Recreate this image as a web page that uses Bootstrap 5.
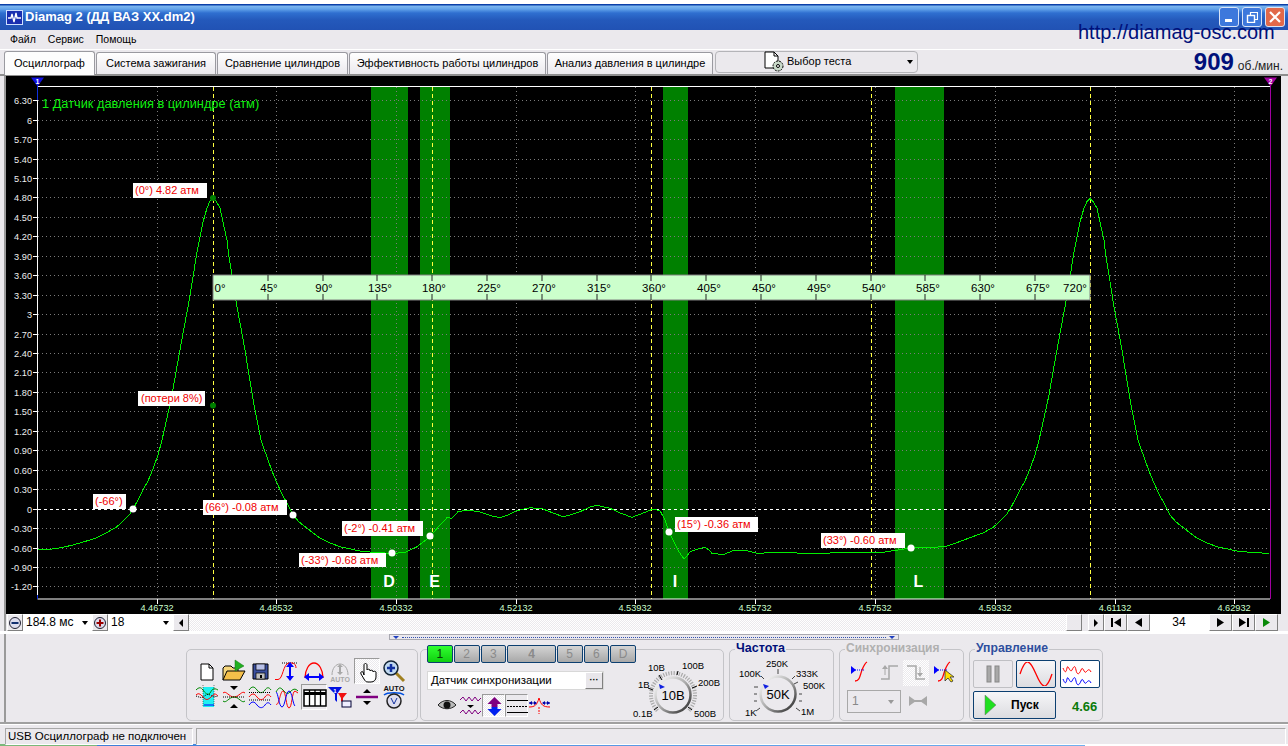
<!DOCTYPE html>
<html lang="ru">
<head>
<meta charset="utf-8">
<title>Diamag 2</title>
<link href="https://cdn.jsdelivr.net/npm/bootstrap@5.3.0/dist/css/bootstrap.min.css" rel="stylesheet">
<style>
html,body{margin:0;height:746px;overflow:hidden;background:#fff}
body{font-family:"Liberation Sans",Arial,sans-serif;font-size:11px;color:#000;line-height:1.2}
.shell{position:relative;width:1288px;height:746px;padding-top:4px;background:#fff}
.ttl{height:26px;background:linear-gradient(#0a3fa8 0,#0a3fa8 1px,#7db7ef 2px,#62a3ea 5px,#2f6fd0 9px,#2459bb 16px,#2152b4 26px);color:#fff;font-size:13px;font-weight:700;padding:0 3px 0 6px}
.ttl-ico{width:17px;height:15px;margin-right:2px}
.win-b{width:20px;height:20px;border:1px solid #d8e4f8;border-radius:3px;background:#3d78dc;padding:0;margin-left:3px;display:flex;align-items:center;justify-content:center}
.win-x{background:#e2694a}
.url{position:absolute;left:1078px;top:20px;font-size:20px;color:#00107a;line-height:24px}
.mnu{height:20px;background:#ebe9ed;border-bottom:1px solid #fff;padding-left:10px;gap:12px;font-size:10.5px}
.tabs-row{height:26px;background:#ebe9ed;padding-left:4px;border-bottom:2px solid #8e8e8e}
.tb{height:22px;margin-top:2px;border:1px solid #9a9aa0;border-radius:3px 3px 0 0;background:linear-gradient(#fff,#ebe9ed);display:flex;align-items:center;justify-content:center;margin-right:1px;white-space:nowrap;border-bottom:0}
.tb-on{height:24px;background:#fdfdfd;margin-top:1px}
.tb-pick{width:203px;height:22px;margin-top:1px;margin-left:1px;border:1px solid #b4b4b8;border-radius:4px;background:#ebe9ed;position:relative;display:flex;align-items:center;padding-left:47px}
.caret-d{width:0;height:0;border:3px solid transparent;border-top:4px solid #000;border-bottom:0}
.rpm{margin-left:auto;color:#00107a;font-size:24px;font-weight:700;line-height:24px;padding-right:5px;display:flex;align-items:baseline;gap:4px}
.rpm-u{font-size:12px;font-weight:400;color:#222}
.edge{background-color:#ebe9ed;background-image:linear-gradient(#9a9a9a,#9a9a9a);background-size:2px 100%;background-position:4px 0;background-repeat:no-repeat}
.plot-wrap{height:538px;padding-left:6px;padding-right:7px}
.plot{display:block;width:1275px;height:538px;background:#000;font-family:"Liberation Sans",Arial,sans-serif}
.srow{height:18px;padding-left:7px;align-items:stretch;border-bottom:1px solid #fff}
.sb{width:16px;border:1px solid;border-color:#fff #808080 #808080 #fff;background:#ebe9ed;padding:0;display:flex;align-items:center;justify-content:center;flex:none;font-size:11px}
.sc{background:#fff;display:flex;align-items:center;justify-content:space-between;padding:0 4px 0 3px;font-size:12px}
.chk{background:repeating-conic-gradient(#fff 0 25%,#ebe9ed 0 50%) 0 0/2px 2px}
.panel{height:90px;border-bottom:2px solid #a0a0a0;box-sizing:border-box}
.split{margin:2px 0 0 389px;width:510px;height:6px;border:1px solid #a8a8b0;background:#ebe9ed;position:relative;display:flex;align-items:center;justify-content:space-between;padding:0 3px}
.split-dots{flex:1;border-top:1px dotted #3050b0;margin:0 3px}
.tri-b{width:0;height:0;border:3px solid transparent;border-top:3px solid #2040c0;border-bottom:0}
.grps{margin:9px 0 0 186px;gap:2px;height:72px}
.grp{height:72px;border:1px solid #c4c4c8;border-radius:5px;position:relative}
.g-tools{width:232px;padding:8px 0 0 7px;display:grid;grid-template-columns:repeat(8,26.67px);grid-auto-rows:26px}
.ic{width:26px;height:26px;display:block}
.pressed{width:26px;height:26px;border:1px solid;border-color:#9a9a9a #fff #fff #9a9a9a}
.g-ch{width:304px;display:flex;padding-left:6px;margin-left:0}
.ch-col{width:209px;margin-top:-5px}
.ch-btns{gap:1px;height:18px}
.cb{height:18px;border:1px solid #0c3f70;border-radius:2px;background:linear-gradient(#d4d4d4,#a8a8a8);color:#8a8a8a;font-size:12px;display:flex;align-items:center;justify-content:center;padding:0}
.cb-on{background:linear-gradient(#30ff30,#10d010);color:#084008}
.cmb{margin-top:8px;width:177px;height:19px;background:#fff;display:flex;align-items:center;justify-content:space-between;font-size:11.5px;padding-left:3px;border:1px solid #d8d8d8}
.cmb-b{width:18px;height:17px;background:#e8e6ea;border:1px solid;border-color:#fff #808080 #808080 #fff;font-size:9px;font-weight:700;line-height:11px;text-align:center;padding:0}
.ch-ic{margin:4px 0 0 9px;gap:0;align-items:center}
.ch-ic .ic{width:23px;height:23px}
.ch-ic .pressed{width:23px;height:23px}
.gt{position:absolute;top:-10px;left:5px;font-size:12.5px;font-weight:700;padding:0 1px;background:#ebe9ed;line-height:16px;color:#00107a}
.gt-sy{color:#b0b0b0;left:5px;font-size:12px}
.gt-ct{color:#2e4f9e;left:5px;font-size:12.200px}
.g-fq{width:105px;margin-left:3px}
.g-sy{width:125px;margin-left:3px}
.g-ct{width:134px;margin-left:3px}
.knob{display:block;font-family:"Liberation Sans",Arial,sans-serif}
.knob-c{margin:8px 0 0 -15px}
.sy-row{position:absolute;left:8px;top:10px;display:flex;gap:1.5px}
.sy-row .ic{width:26px;height:24px}
.sy-cmb{position:absolute;left:7px;top:40px;width:54px;height:23px;border:1px solid #a8a8a8;color:#888;font-size:12px;display:flex;align-items:center;justify-content:space-between;padding:0 6px 0 4px}
.sy-st{position:absolute;left:68px;top:45px}
.c-b{position:absolute;height:28px;border:1px solid #0c3f70;border-radius:2px;background:linear-gradient(#f6f6f8,#dcdce0);padding:0;display:flex;align-items:center;justify-content:center}
.c-g{border-color:#c0c0c4;background:#ebe9ed}
.c-t{position:absolute;left:102px;top:49px;color:#0a7a0a;font-weight:700;font-size:13px}
.stat{height:20px;background:#ebe9ed;padding:3px 0 0 5px;border-top:1px solid #fff;font-size:11.5px}
.stat-a{width:188px;border:1px solid;border-color:#a8a8a8 #fff #fff #a8a8a8;padding-left:2px;height:17px;line-height:14px;white-space:nowrap}
.stat-b{flex:1;margin-left:3px;border:1px solid;border-color:#a8a8a8 #fff #fff #a8a8a8;height:17px;margin-right:2px}
.task{height:4px;background:linear-gradient(90deg,#7ab87a 0,#7ab87a 97px,#3d7fd8 97px,#6fb0ee 1085px,#fff 1085px)}
</style>
</head>
<body>
<div class="shell">
  <div class="ttl d-flex align-items-center">
    <svg class="ttl-ico" viewBox="0 0 17 15"><rect x=".5" y=".5" width="16" height="14" fill="#1a2fb0" stroke="#cfe0ff"/><path d="M2 8h3l1-4 2 8 2-9 1 5h4" fill="none" stroke="#fff" stroke-width="1.3"/></svg>
    <span>Diamag 2 (ДД ВАЗ XX.dm2)</span>
    <span class="ms-auto d-flex">
      <button class="win-b" aria-label="min"><svg width="10" height="10"><rect x="1" y="7" width="7" height="3" fill="#fff"/></svg></button>
      <button class="win-b" aria-label="max"><svg width="12" height="12" fill="none" stroke="#fff"><rect x="1.5" y="4.5" width="7" height="7" stroke-width="1.4"/><path d="M4.5 4V1.5h7v7H9" stroke-width="1.2"/></svg></button>
      <button class="win-b win-x" aria-label="close"><svg width="12" height="12" stroke="#fff" stroke-width="2.2"><path d="M1 1l10 10M11 1L1 11"/></svg></button>
    </span>
  </div>
  <div class="url">http://diamag-osc.com</div>
  <div class="mnu d-flex align-items-center"><span>Файл</span><span>Сервис</span><span>Помощь</span></div>
  <div class="tabs-row d-flex">
    <div class="tb tb-on" style="width:91px">Осциллограф</div>
    <div class="tb" style="width:120px">Система зажигания</div>
    <div class="tb" style="width:131px">Сравнение цилиндров</div>
    <div class="tb" style="width:197px">Эффективность работы цилиндров</div>
    <div class="tb" style="width:166px">Анализ давления в цилиндре</div>
    <div class="tb-pick">
      <svg width="24" height="22" viewBox="0 0 24 22" class="me-0"><path d="M2 1h9l4 4v12H2z" fill="#fff" stroke="#000"/><path d="M11 1v4h4" fill="none" stroke="#000"/><circle cx="15" cy="15" r="5" fill="#c8d8c8" stroke="#000" stroke-dasharray="2 1"/><circle cx="15" cy="15" r="1.5" fill="#fff" stroke="#000"/></svg>
      <span>Выбор теста</span>
      <span class="caret-d ms-auto me-1"></span>
    </div>
    <div class="rpm"><span>909</span><span class="rpm-u">об./мин.</span></div>
  </div>
  <div class="plot-wrap edge">
  <svg class="plot" viewBox="6 76 1275 538" xmlns="http://www.w3.org/2000/svg">
    <g fill="#008000"><rect x="371" y="87" width="37" height="512"/><rect x="420" y="87" width="30" height="512"/><rect x="663" y="87" width="25" height="512"/><rect x="895" y="87" width="49" height="512"/></g>
    <path d="M38 100.500H1270M38 120.500H1270M38 139.500H1270M38 159.500H1270M38 178.500H1270M38 197.500H1270M38 217.500H1270M38 236.500H1270M38 256.500H1270M38 275.500H1270M38 295.500H1270M38 314.500H1270M38 334.500H1270M38 353.500H1270M38 372.500H1270M38 392.500H1270M38 411.500H1270M38 431.500H1270M38 450.500H1270M38 470.500H1270M38 489.500H1270M38 528.500H1270M38 548.500H1270M38 567.500H1270M38 586.500H1270" stroke="#7a7a7a" stroke-dasharray="1 3" fill="none"/>
    <path d="M157.500 87V599M276.500 87V599M396.500 87V599M516.500 87V599M635.500 87V599M755.500 87V599M875.500 87V599M995.500 87V599M1115.500 87V599M1234.500 87V599" stroke="#7a7a7a" stroke-dasharray="1 3" fill="none"/>
    <path d="M213.500 87V599M432.500 87V599M651.500 87V599M871.500 87V599M1090.500 87V599" stroke="#ffff40" stroke-dasharray="4 3" fill="none"/>
    <path d="M38 509.500H1270" stroke="#fff" stroke-dasharray="3 3" fill="none"/>
    <path d="M37.500 86V599H1270M37 86.500H1270" stroke="#fff" fill="none"/>
    <path d="M1270.500 86V599" stroke="#a000a0" fill="none"/>
    <path d="M37.500 80V100M37.500 595V599" stroke="#1030e0" fill="none"/>
    <path d="M31 77.500h13l-6.500 9z" fill="#1010e0"/><text x="37.500" y="83.500" fill="#fff" font-size="7" font-weight="700" text-anchor="middle">1</text>
    <path d="M1264 77.500h13l-6.500 9z" fill="#a000a0"/><text x="1270.500" y="83.500" fill="#fff" font-size="7" font-weight="700" text-anchor="middle">2</text>
    <path d="M33 100.500h4M33 120.500h4M33 139.500h4M33 159.500h4M33 178.500h4M33 197.500h4M33 217.500h4M33 236.500h4M33 256.500h4M33 275.500h4M33 295.500h4M33 314.500h4M33 334.500h4M33 353.500h4M33 372.500h4M33 392.500h4M33 411.500h4M33 431.500h4M33 450.500h4M33 470.500h4M33 489.500h4M33 509.500h4M33 528.500h4M33 548.500h4M33 567.500h4M33 586.500h4M157.500 599v5M276.500 599v5M396.500 599v5M516.500 599v5M635.500 599v5M755.500 599v5M875.500 599v5M995.500 599v5M1115.500 599v5M1234.500 599v5" stroke="#fff"/>
    <g fill="#eee" font-size="9.200" text-anchor="end">
      <text x="32" y="104">6.30</text><text x="32" y="124">6</text><text x="32" y="143">5.70</text><text x="32" y="163">5.40</text><text x="32" y="182">5.10</text><text x="32" y="201">4.80</text><text x="32" y="221">4.50</text><text x="32" y="240">4.20</text><text x="32" y="260">3.90</text><text x="32" y="279">3.60</text><text x="32" y="299">3.30</text><text x="32" y="318">3</text><text x="32" y="338">2.70</text><text x="32" y="357">2.40</text><text x="32" y="376">2.10</text><text x="32" y="396">1.80</text><text x="32" y="415">1.50</text><text x="32" y="435">1.20</text><text x="32" y="454">0.90</text><text x="32" y="474">0.60</text><text x="32" y="493">0.30</text><text x="32" y="513">0</text><text x="32" y="532">-0.30</text><text x="32" y="552">-0.60</text><text x="32" y="571">-0.90</text><text x="32" y="590">-1.20</text>
    </g>
    <g fill="#ccffcc" font-size="9.200" text-anchor="middle">
      <text x="157" y="611">4.46732</text><text x="276" y="611">4.48532</text><text x="396" y="611">4.50332</text><text x="516" y="611">4.52132</text><text x="635" y="611">4.53932</text><text x="755" y="611">4.55732</text><text x="875" y="611">4.57532</text><text x="995" y="611">4.59332</text><text x="1115" y="611">4.61132</text><text x="1234" y="611">4.62932</text>
    </g>
    <text x="42" y="108" fill="#10f010" font-size="12.800">1 Датчик давления в цилиндре (атм)</text>
    <polyline fill="none" stroke="#00f000" shape-rendering="crispEdges" points="38,549.300 50,549.300 62,547.500 73,545 85,541.500 97,537.700 107,532.500 117,526.700 125,519 130,514 133,509 138,500 143,490 148,481 153,469 158,455 162,440 167,418 172,395 176,372 180,350 184,328 188,307 193,277 197,252 200,237 203,222 207,208 210,201 213,197.500 216,201 220,208 223,222 227,240 229,257 232,275 237,307 241,328 245,350 249,375 254,405 258,425 261,440 264,449 267,457 272,471 277,483 282,494 287,503 293,515 299,522 307,528 313,533 320,538 330,543 340,546.700 360,551 377,552.700 392,553.300 405,552.700 417,546.700 430,536.700 440,525 447,517.700 452,518.300 458,511.700 468,510 480,512 490,515.500 500,517.700 508,515 517,510.700 530,507.700 543,509 553,513 563,516.700 572,514.500 580,511.700 590,507 597,505.300 610,508.300 620,513 632,517.300 642,513.500 653,509 660,510.700 665,520 669,531.700 677,548.300 681,555 684,558.700 687,556 690,551.700 697,549.300 705,547.300 709,550 712,553.300 723,554.700 733,550.700 747,550.700 757,553.300 780,552.300 813,553.700 847,552.300 880,552.700 911,548 933,547.500 947,546 960,541.500 970,537.700 984,532.500 994,526.700 1002,519 1007,514 1010,509 1015,500 1020,490 1025,481 1030,469 1035,455 1039,440 1044,418 1049,395 1053,372 1057,350 1061,328 1065,307 1070,277 1074,252 1077,237 1080,222 1084,208 1087,201.500 1090,198.500 1093,201.500 1097,208 1100,222 1104,240 1106,257 1109,275 1114,307 1118,328 1122,350 1126,375 1131,405 1135,425 1138,440 1141,449 1144,457 1149,471 1154,483 1159,494 1164,503 1170,515 1176,522 1184,528 1190,533 1197,538 1207,543 1217,546.700 1237,551 1254,552.700 1269,553.300"/>
    <g>
      <rect x="213" y="275" width="877" height="25" fill="#ccffcc" stroke="#808080"/>
      <path d="M268 275v6M268 300v-6M323 275v6M323 300v-6M377 275v6M377 300v-6M432 275v6M432 300v-6M487 275v6M487 300v-6M542 275v6M542 300v-6M597 275v6M597 300v-6M651 275v6M651 300v-6M706 275v6M706 300v-6M761 275v6M761 300v-6M816 275v6M816 300v-6M871 275v6M871 300v-6M925 275v6M925 300v-6M980 275v6M980 300v-6M1035 275v6M1035 300v-6" stroke="#222"/>
      <g font-size="11.500" fill="#000" text-anchor="middle">
        <text x="220" y="292">0°</text><text x="269" y="292">45°</text><text x="324" y="292">90°</text><text x="380" y="292">135°</text><text x="434" y="292">180°</text><text x="489" y="292">225°</text><text x="544" y="292">270°</text><text x="599" y="292">315°</text><text x="654" y="292">360°</text><text x="709" y="292">405°</text><text x="764" y="292">450°</text><text x="819" y="292">495°</text><text x="874" y="292">540°</text><text x="928" y="292">585°</text><text x="983" y="292">630°</text><text x="1038" y="292">675°</text><text x="1075" y="292">720°</text>
      </g>
    </g>
    <g fill="#fff">
      <rect x="133" y="183" width="74" height="15"/><rect x="138" y="391" width="67" height="15"/><rect x="93" y="494" width="33" height="15"/><rect x="203" y="500" width="84" height="15"/><rect x="342" y="521" width="81" height="15"/><rect x="299" y="553" width="87" height="14"/><rect x="675" y="517" width="83" height="15"/><rect x="821" y="533" width="84" height="15"/>
      <circle cx="133" cy="509" r="3.500"/><circle cx="293" cy="515" r="3.500"/><circle cx="392" cy="553" r="3.500"/><circle cx="430" cy="536" r="3.500"/><circle cx="669" cy="532" r="3.500"/><circle cx="911" cy="548" r="3.500"/>
    </g>
    <circle cx="213" cy="198" r="3" fill="#008000"/><circle cx="213" cy="405.500" r="3" fill="#008000"/>
    <g fill="#f00000" font-size="11">
      <text x="135" y="194">(0°) 4.82 атм</text><text x="141" y="402">(потери 8%)</text><text x="95" y="505">(-66°)</text><text x="205" y="511">(66°) -0.08 атм</text><text x="344" y="532">(-2°) -0.41 атм</text><text x="301" y="564">(-33°) -0.68 атм</text><text x="677" y="528">(15°) -0.36 атм</text><text x="823" y="544">(33°) -0.60 атм</text>
    </g>
    <g fill="#fff" font-size="16" font-weight="700" text-anchor="middle">
      <text x="389" y="587">D</text><text x="434.500" y="587">E</text><text x="675" y="587">I</text><text x="918.500" y="587">L</text>
    </g>
  </svg>
  </div>
  <div class="srow d-flex edge">
    <button class="sb" aria-label="minus"><svg width="14" height="14"><circle cx="7" cy="7" r="5.500" fill="#dde" stroke="#223"/><rect x="3.500" y="6" width="7" height="2" fill="#123070"/></svg></button>
    <div class="sc" style="width:69px"><span>184.8 мс</span><span class="caret-d"></span></div>
    <button class="sb" aria-label="plus"><svg width="14" height="14"><circle cx="7" cy="7" r="5.500" fill="#dde" stroke="#223"/><path d="M3.500 7h7M7 3.500v7" stroke="#900" stroke-width="2"/></svg></button>
    <div class="sc" style="width:65px"><span>18</span><span class="caret-d"></span></div>
    <button class="sb" aria-label="left"><svg width="6" height="8"><path d="M5 0v8L1 4z"/></svg></button>
    <div class="chk" style="width:877px"></div>
    <button class="sb" aria-label="thumb"></button>
    <div style="width:6px"></div>
    <button class="sb" aria-label="right"><svg width="6" height="8"><path d="M1 0v8l4-4z"/></svg></button>
    <button class="sb" style="width:23px" aria-label="first"><svg width="12" height="9"><path d="M1 0h2v9H1zM11 0v9L4 4.500z"/></svg></button>
    <button class="sb" style="width:23px" aria-label="prev"><svg width="9" height="9"><path d="M8 0v9L1 4.500z"/></svg></button>
    <div class="sc justify-content-center" style="width:59px"><span>34</span></div>
    <button class="sb" style="width:23px" aria-label="next"><svg width="9" height="9"><path d="M1 0v9l7-4.500z"/></svg></button>
    <button class="sb" style="width:23px" aria-label="last"><svg width="12" height="9"><path d="M1 0v9l7-4.500zM9 0h2v9H9z"/></svg></button>
    <button class="sb" style="width:23px" aria-label="play"><svg width="9" height="9"><path d="M1 0v9l7-4.500z" fill="#0a8a0a"/></svg></button>
  </div>
  <div class="panel edge">
    <div class="split"><span class="tri-b"></span><span class="split-dots"></span><span class="tri-b"></span></div>
    <div class="grps d-flex">
      <div class="grp g-tools">
        <svg class="ic" viewBox="0 0 26 26"><path d="M7 6h8l4 4v12H7z" fill="#fff" stroke="#000"/><path d="M15 6v4h4" fill="none" stroke="#000"/></svg>
        <svg class="ic" viewBox="0 0 26 26"><path d="M2 22V10l2-2h6l2 2h5v4" fill="#f6d77e" stroke="#000"/><path d="M2 22l4-9h18l-5 9z" fill="#f4bf4a" stroke="#000"/><path d="M14 2l9 6-9 5z" fill="#20b020" stroke="#107010" stroke-width=".5"/></svg>
        <svg class="ic" viewBox="0 0 26 26"><path d="M6 6h15v15H6z" fill="#3a4fa0" stroke="#000"/><rect x="9" y="6" width="9" height="6" fill="#b8c0e8" stroke="#000" stroke-width=".7"/><rect x="9" y="15" width="9" height="6" fill="#c0c0c0" stroke="#000" stroke-width=".7"/><rect x="13" y="17" width="2" height="3"/></svg>
        <svg class="ic" viewBox="0 0 26 26"><path d="M8 5h15" stroke="#000" stroke-dasharray="1 1"/><path d="M1 21.500h3c5 0 5-16 11-16.500h3c3 0 4 3 4 5" fill="none" stroke="#f00"/><path d="M16 5v16" stroke="#00f" stroke-width="2"/><path d="M12 9l4-5 4 5zM12 18l4 5 4-5z" fill="#00f"/></svg>
        <svg class="ic" viewBox="0 0 26 26"><path d="M4 20c0-8 4-15 9-15s9 7 9 15" fill="none" stroke="#f00" stroke-width="1.300"/><path d="M5 19h16" stroke="#00f" stroke-width="2"/><path d="M8 15l-5 4 5 4zM18 15l5 4-5 4z" fill="#00f"/></svg>
        <svg class="ic" viewBox="0 0 26 26"><path d="M5 17c0-7 4-11 8-11s8 4 8 11" fill="none" stroke="#a8a8a8"/><path d="M13 7v9" stroke="#a8a8a8" stroke-width="2"/><path d="M10 9l3-3 3 3zM10 14l3 3 3-3z" fill="#a8a8a8"/><text x="13" y="24" font-size="7" font-weight="700" fill="#a8a8a8" text-anchor="middle" font-family="Liberation Sans">AUTO</text></svg>
        <div class="pressed chk"><svg class="ic" viewBox="1 1 26 26"><path d="M10 17V7c0-2 3-2 3 0v5c0-1 3-1 3 0v1c0-1 3-1 3 0v1c0-1 3-1 3 0v5c0 3-2 5-5 5h-3c-2 0-3-1-4-3l-3-5c-1-2 1-3 2-2z" fill="#fff" stroke="#000"/></svg></div>
        <svg class="ic" viewBox="0 0 26 26"><path d="M15 15l8 8" stroke="#a08020" stroke-width="3"/><circle cx="10" cy="10" r="7" fill="#c0d8f0" stroke="#123" stroke-width="1.500"/><path d="M10 6v8M6 10h8" stroke="#1030a0" stroke-width="2.500"/></svg>
        <svg class="ic" viewBox="0 0 26 26"><rect x="9" y="3" width="11" height="20" fill="#20f0f0"/><path d="M2 6c3-3 5-3 7 0s5 6 7 3 3-6 8-3" fill="none" stroke="#080"/><path d="M2 12c3 1 5 2 7 1s4-4 7-2 4 2 8 1" fill="none" stroke="#000" stroke-dasharray="1 1"/><path d="M2 11c3-3 5 0 8 3s5 1 8-2 4-2 6 0" fill="none" stroke="#f00"/><path d="M10 21h10" stroke="#00f"/><path d="M9 1v22M20 1v22" stroke="#000" stroke-width=".5" stroke-dasharray="1 1"/></svg>
        <svg class="ic" viewBox="0 0 26 26"><path d="M2 9c3-3 6 4 11 4s8-7 11-4" fill="none" stroke="#f00"/><path d="M2 17c3 3 6-4 11-4s8 7 11 4" fill="none" stroke="#080"/><path d="M2 13h22" stroke="#000" stroke-dasharray="1 1"/><path d="M9 2h8l-4 4zM9 24h8l-4-4z"/></svg>
        <svg class="ic" viewBox="0 0 26 26"><path d="M2 6c3-4 5-4 8 0s6 3 8 0 4-3 6 0" fill="none" stroke="#080"/><path d="M2 8.500h22M2 16h22" stroke="#000" stroke-dasharray="1 1"/><path d="M2 13c3-4 5-4 8 0s6 3 8 0 4-3 6 0" fill="none" stroke="#f00"/><path d="M2 21c3-4 5-4 8 0s6 3 8 0 4-3 6 0" fill="none" stroke="#00f"/></svg>
        <svg class="ic" viewBox="0 0 26 26"><path d="M2 8c3-5 4-5 7-2s4 5 7 2 5-4 8-1" fill="none" stroke="#080"/><path d="M2 20c3 3 4-13 7-13s3 17 6 17 3-17 6-17l3 2" fill="none" stroke="#f00"/><path d="M2 8c2 0 3 15 6 15s4-16 7-16 4 14 6 15" fill="none" stroke="#00f"/></svg>
        <div class="pressed" style="background:#ebe9ed"><svg class="ic" viewBox="1 1 26 26"><rect x="3" y="6" width="22" height="16" fill="#fff" stroke="#000" stroke-width="1.500"/><path d="M3 9.500h22" stroke="#000" stroke-width="3"/><path d="M8.500 6v16M14 6v16M19.500 6v16" stroke="#000" stroke-width="1.300"/></svg></div>
        <svg class="ic" viewBox="0 0 26 26"><path d="M1 3h14l-5 7v8l-2-2V10z" fill="#0010e0"/><path d="M11 9h9l-4 5v5l-2-2v-3z" fill="#f01010"/><text x="8" y="8.500" font-size="6" font-weight="700" fill="#fff" text-anchor="middle" font-family="Liberation Sans">1</text><rect x="15" y="17" width="9" height="6" fill="#eef" stroke="#003"/></svg>
        <svg class="ic" viewBox="0 0 26 26"><path d="M2 13h22" stroke="#800080" stroke-width="2.500"/><path d="M9 9l4-4 4 4zM9 17l4 4 4-4z"/></svg>
        <svg class="ic" viewBox="0 0 26 26"><text x="13" y="7" font-size="7.500" font-weight="700" fill="#111" text-anchor="middle" font-family="Liberation Sans">AUTO</text><path d="M3 11c3-3 17-3 20 0" fill="none" stroke="#0050e0" stroke-width="1.500"/><circle cx="13" cy="17" r="7" fill="#dde" stroke="#222" stroke-width="1.500"/><path d="M10 14l3 6 3-6" fill="none" stroke="#1030a0"/></svg>
      </div>
      <div class="grp g-ch">
        <div class="ch-col">
          <div class="ch-btns d-flex">
            <button class="cb cb-on" style="width:26px">1</button><button class="cb" style="width:26px">2</button><button class="cb" style="width:26px">3</button><button class="cb fw-bold" style="width:49px">4</button><button class="cb" style="width:26px">5</button><button class="cb" style="width:26px">6</button><button class="cb" style="width:26px">D</button>
          </div>
          <div class="cmb"><span>Датчик синхронизации</span><button class="cmb-b">···</button></div>
          <div class="ch-ic d-flex">
            <svg class="ic" viewBox="0 0 23 23"><path d="M2 11c5-6 13-6 18 0-5 5-13 5-18 0z" fill="#bbb" stroke="#222"/><circle cx="11" cy="11" r="3.500" fill="#111"/></svg>
            <svg class="ic" viewBox="0 0 23 23"><path d="M1 6l3-3 3 4 3-4 3 4 3-4 3 4 3-3" fill="none" stroke="#800080"/><path d="M8 11h7l-3.500 3z" fill="#000"/><path d="M1 19l3-3 3 4 3-4 3 4 3-4 3 4 3-3" fill="none" stroke="#800080"/></svg>
            <div class="pressed chk"><svg class="ic" viewBox="0 0 23 23"><path d="M11.500 2l-7 7h4v3h6V9h4z" fill="#800080"/><path d="M11.500 21l-7-7h4v-2h6v2h4z" fill="#0020f0"/></svg></div>
            <div class="pressed"><svg class="ic" viewBox="0 0 23 23"><path d="M1 5.500h21M1 17.500h21" stroke="#000"/><path d="M1 11.500h21" stroke="#000" stroke-dasharray="2 1"/></svg></div>
            <svg class="ic" viewBox="0 0 23 23"><path d="M1 13c6 0 8-2 10-9 2 7 4 9 11 9" fill="none" stroke="#f00"/><path d="M1 9h7M15 9h7" stroke="#00a"/><path d="M1 9l3-2v4zM22 9l-3-2v4zM9 9L6 7v4zM14 9l3-2v4z" fill="#00a"/><path d="M11 13v7" stroke="#f00" stroke-dasharray="2 1"/></svg>
          </div>
        </div>
        <svg class="knob knob-c" width="100" height="64" viewBox="0 0 100 64">
          <defs><linearGradient id="kg" x1="0" y1="0" x2="1" y2="1"><stop offset=".1" stop-color="#f4f4f4"/><stop offset=".5" stop-color="#aaa"/><stop offset="1" stop-color="#222"/></linearGradient></defs>
          <path d="M36.400 52.600A22 22 0 1 1 67.600 52.600" fill="none" stroke="#aaa" stroke-width="4" stroke-dasharray="1.200 1.400"/>
          <circle cx="52" cy="37" r="17.500" fill="#ebe9ed" stroke="url(#kg)" stroke-width="2.500"/>
          <path d="M38 17l3 5M57 13l-1 4M27 30l5 2M71 30l5-2M33 52l4-3M71 52l-4-3" stroke="#000"/>
          <path d="M38 26l6 3-5 2z" fill="#1020e0"/>
          <text x="52" y="41.500" font-size="13" text-anchor="middle">10В</text>
          <g font-size="9.500"><text x="27" y="13">10В</text><text x="61" y="11">100В</text><text x="17" y="30">1В</text><text x="77" y="28">200В</text><text x="12" y="59">0.1В</text><text x="73" y="59">500В</text></g>
        </svg>
      </div>
      <div class="grp g-fq">
        <span class="gt">Частота</span>
        <svg class="knob" width="103" height="70" viewBox="0 0 103 70">
          <circle cx="48" cy="44" r="17.500" fill="#ebe9ed" stroke="url(#kg)" stroke-width="2.500"/>
          <path d="M48 19v5M31 26l3 3M65 26l-3 3M24 37h4M68 32l-4 2M26 61l4-3M70 61l-4-3M24 44h3M24 51h3M72 44h-3M72 51h-3" stroke="#444"/>
          <path d="M33 34l6 2-4 3z" fill="#1020e0"/>
          <text x="48" y="48.500" font-size="13" text-anchor="middle">50K</text>
          <g font-size="9.500"><text x="36" y="17">250K</text><text x="9" y="27">100K</text><text x="66" y="27">333K</text><text x="73" y="39">500K</text><text x="15" y="66">1K</text><text x="71" y="65">1M</text></g>
        </svg>
      </div>
      <div class="grp g-sy">
        <span class="gt gt-sy">Синхронизация</span>
        <div class="sy-row">
          <svg class="ic" viewBox="0 0 26 24"><path d="M7 21c5 0 5-6 7-11s3-7 5-8" fill="none" stroke="#f00" stroke-width="1.300"/><path d="M5 10h12" stroke="#00f" stroke-dasharray="1 1"/><path d="M8 10L3 6v8z" fill="#00f"/></svg>
          <svg class="ic" viewBox="0 0 26 24"><path d="M5 19h8V6h9" fill="none" stroke="#a8a8a8" stroke-width="1.500"/><path d="M9 6v9" stroke="#a8a8a8"/><path d="M6 9l3-4 3 4z" fill="#a8a8a8"/></svg>
          <div class="pressed chk" style="border:0"><svg class="ic" viewBox="0 0 26 24"><path d="M4 6h9v13h9" fill="none" stroke="#a8a8a8" stroke-width="1.500"/><path d="M17 7v9" stroke="#a8a8a8"/><path d="M14 13l3 4 3-4z" fill="#a8a8a8"/></svg></div>
          <svg class="ic" viewBox="0 0 26 24"><path d="M7 21c5 0 5-6 7-11s3-7 5-8" fill="none" stroke="#f00" stroke-width="1.300"/><path d="M5 10h12" stroke="#00f" stroke-dasharray="1 1"/><path d="M8 10L3 6v8z" fill="#00f"/><path d="M14 10v11l3-3 3 4 2-1-3-4h4z" fill="#ffe000" stroke="#333" stroke-width=".8"/></svg>
        </div>
        <div class="sy-cmb"><span>1</span><span class="caret-d" style="border-top-color:#999"></span></div>
        <svg class="sy-st" width="20" height="12" viewBox="0 0 20 12"><path d="M1 6h18" stroke="#a8a8a8" stroke-width="2"/><path d="M1 1l7 5-7 5zM19 1l-7 5 7 5z" fill="#a8a8a8"/></svg>
      </div>
      <div class="grp g-ct">
        <span class="gt gt-ct">Управление</span>
        <button class="c-b c-g" style="left:3px;top:10px;width:40px" aria-label="pause"><svg width="14" height="18"><rect x="1" y="1" width="4" height="16" fill="#a8a8a8" stroke="#888"/><rect x="9" y="1" width="4" height="16" fill="#a8a8a8" stroke="#888"/></svg></button>
        <button class="c-b" style="left:46px;top:10px;width:40px" aria-label="sine"><svg width="36" height="24"><path d="M2 12C8-6 12-2 18 12s10 18 16 0" fill="none" stroke="#f00" stroke-width="1.300"/></svg></button>
        <button class="c-b" style="left:90px;top:10px;width:40px;background:#fff" aria-label="wave"><svg width="36" height="24"><path d="M1 6c2 5 3 5 4 0s3 6 5 2 3-5 4 0 3 5 5 0 3 4 5 2 3-4 5 0" fill="none" stroke="#f00"/><path d="M1 17c2 5 3 5 4 0s3 6 5 2 3-5 4 0 3 5 5 0 3 4 5 2 3-4 5 0" fill="none" stroke="#00f"/></svg></button>
        <button class="c-b justify-content-start" style="left:3px;top:41px;width:83px;font-weight:700;font-size:12px"><svg width="14" height="20" style="margin:0 13px 0 10px"><path d="M1 0v20l11-10z" fill="#20e020" stroke="#707070" stroke-width=".5"/></svg>Пуск</button>
        <span class="c-t">4.66</span>
      </div>
    </div>
  </div>
  <div class="stat d-flex"><div class="stat-a">USB Осциллограф не подключен</div><div class="stat-b"></div></div>
  <div class="task"></div>
</div>
<script src="https://cdn.jsdelivr.net/npm/bootstrap@5.3.0/dist/js/bootstrap.bundle.min.js"></script>
</body>
</html>
